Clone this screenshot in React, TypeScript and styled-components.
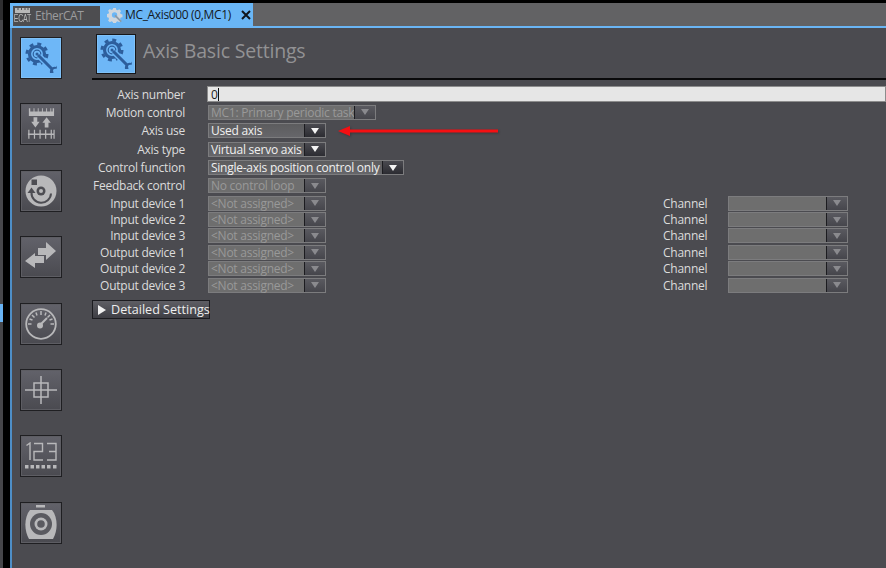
import styled, { createGlobalStyle } from "styled-components";

const Global = createGlobalStyle`
  html, body { margin: 0; padding: 0; background: #4b4b50; }
  body { font-family: "Open Sans", "Noto Sans", sans-serif; overflow: hidden; }
`;

const inks = {
  light: "#b8b8ba",
  blue: "#2d5e9c",
  sky: "#6eb7f7",
};

const GearWrench = () => (
  <svg width="32" height="32" viewBox="0 0 32 32" fill="none">
    <circle cx="12" cy="12" r="10" stroke={inks.blue} strokeWidth="3" strokeDasharray="3.900 3.950" />
    <circle cx="12" cy="12" r="7.500" stroke={inks.blue} strokeWidth="3.200" />
    <circle cx="12" cy="12" r="3.800" stroke={inks.blue} strokeWidth="1.200" />
    <circle cx="12" cy="12" r="1.500" fill={inks.blue} />
    <path d="M14 14l13 13" stroke={inks.sky} strokeWidth="6" />
    <path d="M13 13l14 14" stroke={inks.blue} strokeWidth="3" />
    <path d="M25 31a5 5 0 0 1 6-6l.5-1.500 .5 3-3 .5-1 1 .5 3z" fill={inks.blue} />
  </svg>
);

const Scale = () => (
  <svg width="28" height="34" viewBox="0 0 30 30" preserveAspectRatio="none">
    <g fill={inks.light}>
      <path d="M2 1h1.500v3H7V1h1v3h3.500V1h1v3H16V1h1v3h3.500V1h1v3H25V1h1v3h1.500V1H29v7H2z" />
      <path d="M9 18l-4.500-5H7V9h4v4h2.500zM21 9l4.500 5H23v4h-4v-4h-2.500z" />
    </g>
    <g stroke={inks.light} strokeWidth="1.300" fill="none">
      <path d="M1 24h28M2 20v8M8 20v8M14 20v8M20 20v8M26 20v8M29 20v8" />
    </g>
  </svg>
);

const Disc = () => (
  <svg width="32" height="32" viewBox="0 0 32 32" fill="none">
    <circle cx="16" cy="16" r="15.500" fill={inks.light} />
    <circle cx="16" cy="16" r="4.500" fill="#4d4d53" />
    <circle cx="16" cy="16" r="2" fill={inks.light} />
    <rect x="6.500" y="4.500" width="5.500" height="5.500" fill="#4d4d53" />
    <path d="M6.500 17.500A9.700 9.700 0 0 0 26 18.500" stroke="#4d4d53" strokeWidth="2" />
    <path d="M2.500 18l4-5.500 4 5.500z" fill="#4d4d53" />
  </svg>
);

const Arrows = () => (
  <svg width="34" height="30" viewBox="0 0 34 30">
    <path fill={inks.light} d="M14 6h8V0l10 9-10 9v-5h-8zM20 14v7h-9v5L1 19l10-8v3z" />
  </svg>
);

const Gauge = () => (
  <svg width="32" height="32" viewBox="0 0 32 32">
    <circle cx="16" cy="16" r="14.800" fill="none" stroke={inks.light} strokeWidth="1.800" />
    <path stroke={inks.light} strokeWidth="1.500" d="M16 3v4M7 7l2.500 2.500M3 16h3.500M25 7l-2.500 2.500M29 16h-3.500M11 4.500l1 3M21 4.500l-1 3M4.500 11l3 1M27.500 11l-3 1" />
    <path stroke={inks.light} strokeWidth="2" d="M15 17l7-7" />
    <circle cx="15" cy="17.500" r="3" fill={inks.light} />
  </svg>
);

const Crosshair = () => (
  <svg width="32" height="32" viewBox="0 0 32 32">
    <path fill="none" stroke={inks.light} strokeWidth="1.500" d="M0 16h32M16 2v28M9 9h14v14H9z" />
  </svg>
);

const Counter = () => (
  <svg width="32" height="28" viewBox="0 0 32 28">
    <g fill="none" stroke={inks.light} strokeWidth="1.400">
      <path d="M1.500 3.500L5 1v17" />
      <path d="M9 1.500h8.500v8H9v8.500h9" />
      <path d="M22 1.500h9v8h-7M31 9.500v8.500h-9" />
    </g>
    <g fill={inks.light}>
      <rect x="0" y="23" width="3.500" height="3.500" />
      <rect x="5.500" y="23" width="3.500" height="3.500" />
      <rect x="11" y="23" width="3.500" height="3.500" />
      <rect x="16.500" y="23" width="3.500" height="3.500" />
      <rect x="22" y="23" width="3.500" height="3.500" />
      <rect x="28" y="23" width="3.500" height="3.500" />
    </g>
  </svg>
);

const Lens = () => (
  <svg width="32" height="36" viewBox="0 0 32 36">
    <rect x="11" y="0" width="9" height="2.500" fill={inks.light} />
    <path fill={inks.light} d="M5 5h22c6 7 6 21 1 29H4C-1 26-1 12 5 5z" />
    <circle cx="16" cy="19" r="11" fill="#5a5a60" />
    <circle cx="16" cy="19" r="6.500" fill={inks.light} />
    <circle cx="16" cy="19" r="3.800" fill="#5a5a60" />
  </svg>
);

const EcatLogo = () => (
  <LogoStack>
    <svg width="17" height="6" viewBox="0 0 17 6">
      <path fill="#b8b8b8" d="M1 0h15v5H1z" />
      <path fill="#4d4d50" d="M3.500 0h1v2h-1zM7 0h1v2H7zM10.500 0h1v2h-1zM13.500 0h1v2h-1z" />
    </svg>
    <LogoText>ECAT</LogoText>
  </LogoStack>
);

const TabGear = () => (
  <svg width="16" height="16" viewBox="0 0 18 18">
    <path fill="#cfd6dd" d="M7 1h3l.4 2 1.600.700 1.800-1.100 2 2-1.100 1.800.7 1.600 2 .4v3l-2 .4-.7 1.600 1.100 1.800-2 2-1.800-1.100-1.600.7-.4 2H7l-.4-2-1.600-.7-1.800 1.100-2-2 1.100-1.800-.7-1.600-2-.4V8l2-.4.700-1.600L1.200 4.200l2-2L5 3.300l1.600-.7z" />
    <circle cx="8.500" cy="9" r="3" fill="#6ab6f6" />
    <path stroke="#8e9aa6" strokeWidth="2" d="M9 9.500l7 7" />
  </svg>
);

const CloseIcon = () => (
  <svg width="10" height="10" viewBox="0 0 10 10">
    <path d="M1 1l8 8M9 1l-8 8" stroke="#11161c" strokeWidth="2" />
  </svg>
);

const rows = [
  { label: "Motion control", value: "MC1: Primary periodic task", width: 168, disabled: true },
  { label: "Axis use", value: "Used axis", width: 118, spaced: true },
  { label: "Axis type", value: "Virtual servo axis", width: 118, spaced: true },
  { label: "Control function", value: "Single-axis position control only", width: 196 },
  { label: "Feedback control", value: "No control loop", width: 118, disabled: true },
];

const devices = ["Input device 1", "Input device 2", "Input device 3", "Output device 1", "Output device 2", "Output device 3"];

const sideIcons = [<Scale />, <Disc />, <Arrows />, <Gauge />, <Crosshair />, <Counter />, <Lens />];

const Dropdown = ({ value, width, disabled }: { value?: string; width: number; disabled?: boolean }) => (
  <Select $width={width} $disabled={disabled}>
    <SelectText $disabled={disabled}>{value}</SelectText>
    <Caret $disabled={disabled}>
      <CaretGlyph $disabled={disabled} />
    </Caret>
  </Select>
);

const App = () => (
  <>
    <Global />
    <Page>
      <Gutter>
        <GutterTop />
        <GutterMark />
      </Gutter>
      <Content>
        <TabBar>
          <TabStrip>
            <Tab>
              <EcatLogo />
              <TabLabel>EtherCAT</TabLabel>
            </Tab>
            <ActiveTab>
              <TabGear />
              <ActiveLabel>MC_Axis000 (0,MC1)</ActiveLabel>
              <CloseIcon />
            </ActiveTab>
          </TabStrip>
        </TabBar>
        <Body>
          <SideRail>
            <RailButton $active>
              <GearWrench />
            </RailButton>
            {sideIcons.map((icon, i) => (
              <RailButton key={i}>{icon}</RailButton>
            ))}
          </SideRail>
          <Panel>
            <PanelHeader>
              <HeaderIcon>
                <GearWrench />
              </HeaderIcon>
              <Title>Axis Basic Settings</Title>
            </PanelHeader>
            <Divider />
            <NumberRow>
              <Label>Axis number</Label>
              <NumberInput>
                0<TextCursor />
              </NumberInput>
            </NumberRow>
            {rows.map((r) => (
              <Row key={r.label} $spaced={r.spaced}>
                <Label>{r.label}</Label>
                <Dropdown value={r.value} width={r.width} disabled={r.disabled} />
                {r.label === "Axis use" && (
                  <RedArrow width="162" height="10" viewBox="0 0 162 10">
                    <path d="M1 5l12-5v3.600h148v2.800H13V10z" fill="#f40f12" />
                  </RedArrow>
                )}
              </Row>
            ))}
            {devices.map((d) => (
              <DeviceRow key={d}>
                <Label>{d}</Label>
                <Dropdown value="<Not assigned>" width={118} disabled />
                <ChannelGroup>
                  <ChannelLabel>Channel</ChannelLabel>
                  <Dropdown width={120} disabled />
                </ChannelGroup>
              </DeviceRow>
            ))}
            <DetailButton>
              <DetailCaret />
              Detailed Settings
            </DetailButton>
          </Panel>
        </Body>
      </Content>
    </Page>
  </>
);

export default App;

const Page = styled.div`
  display: flex;
  width: 886px;
  height: 568px;
  overflow: hidden;
  background: #000;
`;

const Gutter = styled.div`
  width: 3px;
  flex-shrink: 0;
  margin-right: 7px;
  background: #46464a;
  display: flex;
  flex-direction: column;
`;

const GutterTop = styled.div`
  height: 304px;
  background: linear-gradient(#2e2e30 0, #2e2e30 20px, #47474b 20px, #47474b 100%);
`;

const GutterMark = styled.div`
  height: 18px;
  background: #69b4f5;
`;

const Content = styled.div`
  flex: 1;
  min-width: 0;
  display: flex;
  flex-direction: column;
  padding-top: 3px;
`;

const TabBar = styled.div`
  height: 23px;
  display: flex;
  background: #626264;
  border-bottom: 2px solid #6ab5f4;
`;

const TabStrip = styled.div`
  display: flex;
  align-items: stretch;
  padding: 2.500px 0 0 3px;
  background: #69b6f6;
`;

const Tab = styled.div`
  width: 87px;
  display: flex;
  align-items: center;
  gap: 4px;
  padding-left: 1px;
  background: #4d4d50;
  box-sizing: border-box;
`;

const LogoStack = styled.div`
  width: 17px;
  flex-shrink: 0;
  display: flex;
  flex-direction: column;
  align-items: center;
`;

const LogoText = styled.span`
  font-family: "Liberation Sans", sans-serif;
  font-size: 10px;
  line-height: 9px;
  letter-spacing: -0.300px;
  color: #b8b8b8;
  transform: scaleX(0.7);
`;

const TabLabel = styled.span`
  font-size: 12px;
  letter-spacing: -0.400px;
  color: #9c9c9e;
`;

const ActiveTab = styled.div`
  width: 151px;
  margin-left: 2px;
  margin-top: -2.500px;
  display: flex;
  align-items: center;
  padding-left: 5px;
  box-sizing: border-box;
  background: #69b6f6;
`;

const ActiveLabel = styled.span`
  font-size: 12px;
  letter-spacing: -0.350px;
  margin: 0 10px 0 2px;
  color: #14191f;
  white-space: nowrap;
`;

const Body = styled.div`
  flex: 1;
  display: flex;
  min-height: 0;
  background: #4b4b50;
  border-left: 2px solid #4e8fc8;
`;

const SideRail = styled.div`
  width: 42px;
  flex-shrink: 0;
  margin-left: 8px;
  padding-top: 9px;
  display: flex;
  flex-direction: column;
  gap: 24.400px;
`;

const RailButton = styled.div<{ $active?: boolean }>`
  width: 42px;
  height: 42px;
  box-sizing: border-box;
  display: flex;
  align-items: center;
  justify-content: center;
  border: 1px solid #1f1f22;
  box-shadow: inset 0 0 0 1px ${(p) => (p.$active ? "#7fc1f8" : "#5d5d63")};
  background: ${(p) => (p.$active ? inks.sky : "linear-gradient(#62626a, #4a4a50)")};
`;

const Panel = styled.div`
  flex: 1;
  min-width: 0;
  margin-left: 30px;
  display: flex;
  flex-direction: column;
`;

const PanelHeader = styled.div`
  display: flex;
  align-items: center;
  gap: 7px;
  margin-top: 6px;
  margin-left: 4px;
`;

const HeaderIcon = styled(RailButton)`
  width: 40px;
  height: 40px;
  border-color: #17171a;
  background: ${inks.sky};
  box-shadow: inset 0 0 0 1px #7fc1f8;
`;

const Title = styled.h1`
  margin: 0 0 7px;
  font-size: 19.500px;
  letter-spacing: -0.200px;
  font-weight: 400;
  color: #929294;
`;

const Divider = styled.div`
  height: 2px;
  margin-top: 4px;
  background: #0a0a0b;
`;

const Label = styled.span`
  width: 93px;
  flex-shrink: 0;
  text-align: right;
  font-size: 12px;
  letter-spacing: -0.250px;
  color: #dcdcdc;
  white-space: nowrap;
`;

const NumberRow = styled.div`
  display: flex;
  align-items: center;
  margin: 6px 0 1px;
  height: 16px;
`;

const NumberInput = styled.div`
  flex: 1;
  height: 16px;
  margin-left: 22px;
  box-sizing: border-box;
  padding-left: 3px;
  display: flex;
  align-items: center;
  font-size: 12px;
  color: #222;
  background: #e6e6e6;
  border: 1px solid #8c8c8c;
`;

const TextCursor = styled.i`
  width: 1px;
  height: 13px;
  background: #111;
`;

const Row = styled.div<{ $spaced?: boolean }>`
  display: flex;
  align-items: center;
  height: 18.200px;
  position: relative;
  margin-top: ${(p) => (p.$spaced ? "0.500px" : "0")};
`;

const DeviceRow = styled(Row)`
  height: 16.400px;
`;

const Select = styled.div<{ $width: number; $disabled?: boolean }>`
  width: ${(p) => p.$width}px;
  height: 15px;
  margin-left: 23px;
  box-sizing: border-box;
  display: flex;
  flex-shrink: 0;
  border: 1px solid #7c7c7e;
  background: ${(p) => (p.$disabled ? "#6e6e6e" : "linear-gradient(#5c5c5e, #66666a)")};
`;

const SelectText = styled.span<{ $disabled?: boolean }>`
  flex: 1;
  min-width: 0;
  padding-left: 2px;
  font-size: 12px;
  letter-spacing: -0.250px;
  line-height: 13px;
  white-space: nowrap;
  color: ${(p) => (p.$disabled ? "#999" : "#f0f0f0")};
`;

const Caret = styled.span<{ $disabled?: boolean }>`
  width: 20px;
  flex-shrink: 0;
  display: flex;
  align-items: center;
  justify-content: center;
  border-left: 1px solid #1c1c20;
  background: ${(p) => (p.$disabled ? "linear-gradient(#5a5a60, #46464c)" : "linear-gradient(#4a4a50, #2c2c32)")};
`;

const CaretGlyph = styled.i<{ $disabled?: boolean }>`
  width: 0;
  height: 0;
  border-left: 4px solid transparent;
  border-right: 4px solid transparent;
  border-top: 6px solid ${(p) => (p.$disabled ? "#8a8a8e" : "#f4f4f4")};
`;

const ChannelGroup = styled.div`
  position: absolute;
  left: 571px;
  display: flex;
  align-items: center;
`;

const ChannelLabel = styled.span`
  width: 42px;
  font-size: 12px;
  letter-spacing: -0.250px;
  color: #dcdcdc;
`;

const RedArrow = styled.svg`
  position: absolute;
  left: 245px;
  top: 4px;
  filter: drop-shadow(1px 1px 1px rgba(0, 0, 0, 0.25));
`;

const DetailButton = styled.div`
  margin-top: 7px;
  width: 118px;
  height: 19px;
  box-sizing: border-box;
  display: flex;
  align-items: center;
  padding-left: 5px;
  border: 1px solid #1c1c20;
  font-size: 12.600px;
  color: #eee;
  white-space: nowrap;
  background: linear-gradient(#5e5e64, #3e3e44);
`;

const DetailCaret = styled.i`
  width: 0;
  height: 0;
  margin-right: 5px;
  border-top: 5px solid transparent;
  border-bottom: 5px solid transparent;
  border-left: 8px solid #f0f0f0;
`;
